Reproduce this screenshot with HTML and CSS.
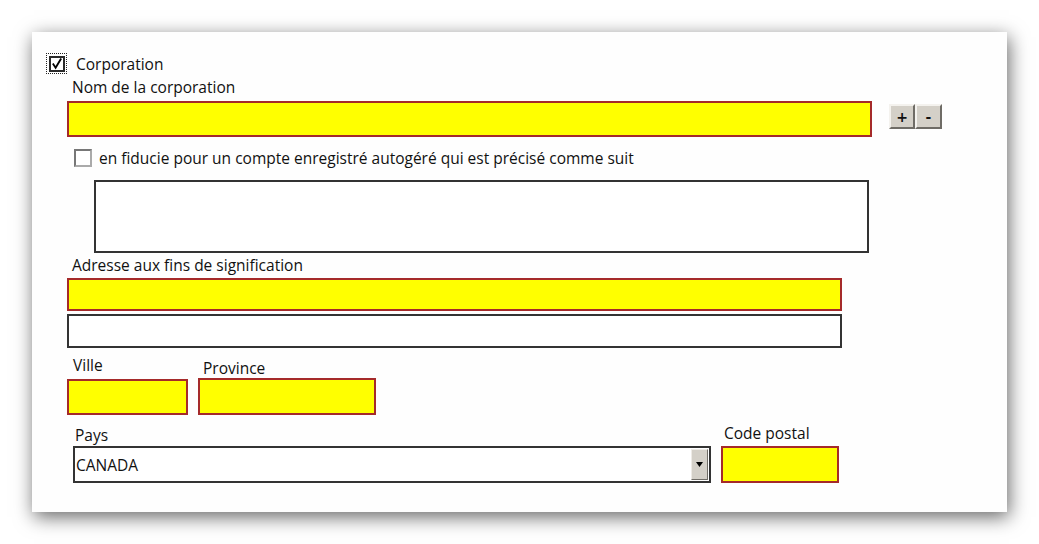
FILE: index.html
```html
<!DOCTYPE html>
<html lang="fr">
<head>
<meta charset="utf-8">
<title>Corporation</title>
<link rel="stylesheet" href="styles.css">
</head>
<body>
<div class="page">
  <div class="panel">
    <div class="row-corp">
      <span class="focus-ring"><span class="cb checked"><svg width="13" height="13" viewBox="0 0 13 13"><path d="M2 6.5 L5 11 L11 1" fill="none" stroke="#000" stroke-width="2"/></svg></span></span>
      <span class="corp-label">Corporation</span>
    </div>
    <div class="label l-nom">Nom de la corporation</div>
    <div class="row-nom">
      <div class="field req f-nom"></div>
      <div class="btns"><span class="btn">+</span><span class="btn">-</span></div>
    </div>
    <div class="row-fid">
      <span class="cb small"></span>
      <span class="fid-label">en fiducie pour un compte enregistré autogéré qui est précisé comme suit</span>
    </div>
    <div class="field plain f-area"></div>
    <div class="label l-adr">Adresse aux fins de signification</div>
    <div class="field req f-adr1"></div>
    <div class="field plain f-adr2"></div>
    <div class="row-vp">
      <div class="col col-ville">
        <div class="label l-ville">Ville</div>
        <div class="field req f-ville"></div>
      </div>
      <div class="col col-prov">
        <div class="label l-prov">Province</div>
        <div class="field req f-prov"></div>
      </div>
    </div>
    <div class="row-pc">
      <div class="col col-pays">
        <div class="label l-pays">Pays</div>
        <div class="select"><span class="sel-text">CANADA</span><span class="sel-btn"><svg width="7" height="5" viewBox="0 0 7 5"><path d="M0 0 H7 L3.5 5 Z" fill="#000"/></svg></span></div>
      </div>
      <div class="col col-cp">
        <div class="label l-cp">Code postal</div>
        <div class="field req f-cp"></div>
      </div>
    </div>
  </div>
</div>
</body>
</html>
```

FILE: styles.css
```css
html, body {
  margin: 0;
  padding: 0;
  background: #ffffff;
}
body {
  font-family: "Open Sans", "Noto Sans", sans-serif;
  font-size: 15.5px;
  font-weight: 500;
  color: #111;
  min-height: 544px;
}
.page {
  padding: 32px 0 0 32px;
}
.panel {
  box-sizing: border-box;
  width: 975px;
  height: 480px;
  background: #fefefe;
  box-shadow: 2px 5px 18px rgba(0, 0, 0, 0.6);
  padding: 21px 0 0 14px;
}
.label {
  line-height: 18px;
  white-space: nowrap;
}
.row-corp {
  display: flex;
  align-items: center;
  height: 21px;
}
.focus-ring {
  box-sizing: border-box;
  width: 21px;
  height: 21px;
  border: 1px dotted #222;
  display: flex;
  align-items: center;
  justify-content: center;
}
.cb {
  box-sizing: border-box;
  display: inline-flex;
  align-items: center;
  justify-content: center;
  background: #fff;
}
.cb.checked {
  width: 16px;
  height: 16px;
  border: 2px solid #2a2a2a;
}
.cb.small {
  width: 18px;
  height: 18px;
  border: 2px solid #777;
  border-right-color: #aaa;
  border-bottom-color: #aaa;
}
.corp-label {
  margin-left: 9px;
  line-height: 18px;
}
.l-nom {
  margin: 4px 0 0 26px;
}
.row-nom {
  display: flex;
  align-items: flex-start;
  margin-top: 5px;
  margin-left: 21px;
}
.field {
  box-sizing: border-box;
}
.req {
  background: #ffff00;
  border: 2px solid #a52a2a;
}
.plain {
  background: #fff;
  border: 2px solid #333;
}
.f-nom {
  width: 805px;
  height: 36px;
}
.btns {
  display: flex;
  margin: 3px 0 0 17px;
}
.btn {
  box-sizing: border-box;
  width: 26px;
  height: 25px;
  background: #d4d0c8;
  border: 2px solid;
  border-color: #f4f2ee #6f6c66 #6f6c66 #f4f2ee;
  display: flex;
  align-items: center;
  justify-content: center;
  font-weight: bold;
  font-size: 14px;
  line-height: 1;
  font-family: "DejaVu Sans", sans-serif;
}
.btn + .btn {
  width: 27px;
}
.row-fid {
  display: flex;
  align-items: center;
  margin: 12px 0 0 28px;
  height: 18px;
}
.fid-label {
  margin-left: 7px;
  line-height: 18px;
  white-space: nowrap;
}
.f-area {
  width: 775px;
  height: 73px;
  margin: 13px 0 0 48px;
}
.l-adr {
  margin: 3px 0 0 26px;
}
.f-adr1 {
  width: 775px;
  height: 33px;
  margin: 4px 0 0 21px;
}
.f-adr2 {
  width: 775px;
  height: 34px;
  margin: 3px 0 0 21px;
}
.row-vp {
  display: flex;
  align-items: flex-end;
  margin: 8px 0 0 21px;
}
.l-ville {
  margin-left: 6px;
  margin-bottom: 2px;
}
.l-prov {
  margin-left: 5px;
  margin-bottom: 1px;
}
.f-ville {
  width: 121px;
  height: 36px;
  margin-top: 5px;
}
.col-prov {
  margin-left: 10px;
}
.f-prov {
  width: 178px;
  height: 37px;
}
.row-pc {
  display: flex;
  align-items: flex-end;
  margin: 9px 0 0 27px;
}
.l-pays {
  margin-left: 2px;
  margin-bottom: 2px;
}
.select {
  box-sizing: border-box;
  width: 638px;
  height: 37px;
  border: 2px solid #333;
  background: #fff;
  display: flex;
  align-items: stretch;
}
.sel-text {
  flex: 1;
  display: flex;
  align-items: center;
  padding-left: 1px;
}
.sel-btn {
  box-sizing: border-box;
  width: 17px;
  margin: 1px 1px 1px 0;
  background: #d4d0c8;
  border: 1px solid;
  border-color: #eeebe6 #6f6c66 #6f6c66 #eeebe6;
  display: flex;
  align-items: center;
  justify-content: center;
}
.col-cp {
  margin-left: 10px;
}
.l-cp {
  margin-left: 3px;
  margin-bottom: 4px;
}
.f-cp {
  width: 118px;
  height: 37px;
}
```
